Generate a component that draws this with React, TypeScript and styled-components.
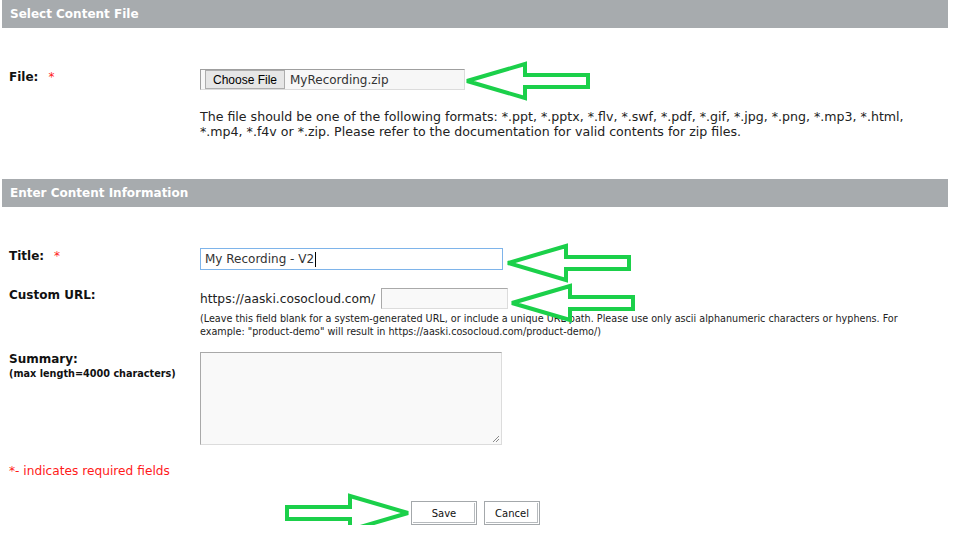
import styled, { createGlobalStyle } from "styled-components";

const GlobalStyle = createGlobalStyle`
  body {
    margin: 0;
    background: #ffffff;
    font-family: "DejaVu Sans", Verdana, sans-serif;
    color: #222222;
  }
`;

const Page = styled.div`
  width: 946px;
  margin-left: 2px;
`;

const SectionHeader = styled.div<{ $top?: number }>`
  height: 28px;
  line-height: 28px;
  margin-top: ${(p) => p.$top ?? 0}px;
  padding-left: 8px;
  background: #a7abae;
  color: #ffffff;
  font-weight: bold;
  font-size: 12px;
`;

const Row = styled.div<{ $top: number }>`
  display: flex;
  align-items: flex-start;
  margin-top: ${(p) => p.$top}px;
  padding-left: 7px;
`;

const Label = styled.div<{ $pad?: number }>`
  width: 191px;
  flex-shrink: 0;
  padding-top: ${(p) => p.$pad ?? 0}px;
  font-size: 12px;
  font-weight: bold;
  color: #111111;
  line-height: 15px;
`;

const Required = styled.span`
  color: #ff1a1a;
  font-weight: normal;
  margin-left: 10px;
`;

const SubLabel = styled.div`
  font-size: 9.7px;
  line-height: 13px;
`;

const Field = styled.div`
  display: flex;
  flex-direction: column;
  align-items: flex-start;
`;

const Anchor = styled.div`
  position: relative;
  display: inline-flex;
  align-items: center;
`;

const ArrowBox = styled.svg<{ $side: "left" | "right"; $dx: number; $dy: number }>`
  position: absolute;
  top: 50%;
  ${(p) => (p.$side === "left" ? "left: 100%;" : "right: 100%;")}
  transform: translate(
    ${(p) => (p.$side === "left" ? p.$dx : -p.$dx)}px,
    calc(-50% + ${(p) => p.$dy}px)
  );
  overflow: visible;
`;

const FileBox = styled.div`
  display: flex;
  align-items: center;
  width: 265px;
  height: 21px;
  box-sizing: border-box;
  border: 1px solid #dcdcdc;
  border-left-color: #9f9f9f;
  border-top-color: #9f9f9f;
  background: #f7f7f7;
  padding-left: 4px;
`;

const ChooseButton = styled.span`
  display: inline-flex;
  align-items: center;
  justify-content: center;
  width: 80px;
  height: 19px;
  box-sizing: border-box;
  border: 1px solid #adadad;
  background: #e6e6e6;
  font-family: "Liberation Sans", Arial, sans-serif;
  font-size: 12px;
  color: #000000;
`;

const FileName = styled.span`
  margin-left: 5px;
  font-size: 12px;
  color: #333333;
`;

const Help = styled.div<{ $small?: boolean; $top: number; $width: number }>`
  margin-top: ${(p) => p.$top}px;
  width: ${(p) => p.$width}px;
  font-size: ${(p) => (p.$small ? 9.65 : 12.6)}px;
  line-height: ${(p) => (p.$small ? 13 : 15)}px;
  color: #222222;
`;

const TextBox = styled.div<{ $width: number; $focused?: boolean }>`
  display: flex;
  align-items: center;
  width: ${(p) => p.$width}px;
  height: ${(p) => (p.$focused ? 22 : 21)}px;
  box-sizing: border-box;
  padding-left: 4px;
  font-size: 12px;
  color: #333333;
  border: 1px solid ${(p) => (p.$focused ? "#7eb4ea" : "#dcdcdc")};
  ${(p) => (p.$focused ? "" : "border-left-color: #a9a9a9; border-top-color: #a9a9a9;")}
  background: ${(p) => (p.$focused ? "#ffffff" : "#f9f9f9")};
`;

const Caret = styled.span`
  display: inline-block;
  width: 1px;
  height: 15px;
  margin-left: 1px;
  background: #000000;
`;

const UrlLine = styled.div`
  display: flex;
  align-items: center;
  gap: 6px;
  font-size: 12.25px;
  color: #222222;
`;

const TextArea = styled.div`
  position: relative;
  width: 302px;
  height: 93px;
  box-sizing: border-box;
  border: 1px solid #dcdcdc;
  border-left-color: #a9a9a9;
  border-top-color: #a9a9a9;
  background: #f9f9f9;
`;

const Grip = styled.svg`
  position: absolute;
  right: 1px;
  bottom: 1px;
`;

const RequiredNote = styled.div`
  margin-top: 19px;
  padding-left: 7px;
  font-size: 12.2px;
  line-height: 15px;
  color: #ff1a1a;
`;

const Buttons = styled.div`
  display: flex;
  justify-content: center;
  gap: 7px;
  margin-top: 22px;
  padding-left: 1px;
`;

const Button = styled.button<{ $width: number }>`
  width: ${(p) => p.$width}px;
  height: 24px;
  border: 1px solid #a4a8ab;
  box-shadow: inset 0 0 0 1px #ffffff, inset -1px -1px 0 1px #b7bbbe;
  background: #ffffff;
  font-family: "DejaVu Sans", Verdana, sans-serif;
  font-size: 10px;
  color: #111111;
  padding: 0;
`;

function Arrow({
  side = "left",
  dx = 0,
  dy = 0,
}: {
  side?: "left" | "right";
  dx?: number;
  dy?: number;
}) {
  return (
    <ArrowBox $side={side} $dx={dx} $dy={dy} width="128" height="38" viewBox="0 0 128 38">
      <g transform={side === "right" ? "translate(128,0) scale(-1,1)" : undefined}>
        <polygon
          points="3,19 61,2 61,13 124,13 124,25 61,25 61,36"
          fill="#ffffff"
          stroke="#1bd04a"
          strokeWidth="4"
          strokeLinejoin="miter"
          strokeMiterlimit="3"
        />
      </g>
    </ArrowBox>
  );
}

export default function App() {
  return (
    <>
      <GlobalStyle />
      <Page>
        <SectionHeader>Select Content File</SectionHeader>

        <Row $top={41}>
          <Label $pad={1}>
            File:<Required>*</Required>
          </Label>
          <Field>
            <Anchor>
              <FileBox>
                <ChooseButton>Choose File</ChooseButton>
                <FileName>MyRecording.zip</FileName>
              </FileBox>
              <Arrow dx={-1} dy={1} />
            </Anchor>
            <Help $top={19} $width={720}>
              The file should be one of the following formats: *.ppt, *.pptx,
              *.flv, *.swf, *.pdf, *.gif, *.jpg, *.png, *.mp3, *.html, *.mp4,
              *.f4v or *.zip. Please refer to the documentation for valid
              contents for zip files.
            </Help>
          </Field>
        </Row>

        <SectionHeader $top={40}>Enter Content Information</SectionHeader>

        <Row $top={41}>
          <Label $pad={1}>
            Title:<Required>*</Required>
          </Label>
          <Anchor>
            <TextBox $width={303} $focused>
              My Recording - V2
              <Caret />
            </TextBox>
            <Arrow dx={2} dy={4} />
          </Anchor>
        </Row>

        <Row $top={18}>
          <Label>Custom URL:</Label>
          <Field>
            <UrlLine>
              https://aaski.cosocloud.com/
              <Anchor>
                <TextBox $width={127} />
                <Arrow dx={1} dy={4} />
              </Anchor>
            </UrlLine>
            <Help $small $top={3} $width={720}>
              (Leave this field blank for a system-generated URL, or include a
              unique URL path. Please use only ascii alphanumeric characters or
              hyphens. For example: "product-demo" will result in
              https://aaski.cosocloud.com/product-demo/)
            </Help>
          </Field>
        </Row>

        <Row $top={14}>
          <Label $pad={0}>
            Summary:
            <SubLabel>(max length=4000 characters)</SubLabel>
          </Label>
          <TextArea>
            <Grip width="9" height="9" viewBox="0 0 9 9">
              <path d="M8 2 L2 8 M8 5 L5 8" stroke="#8a8a8a" strokeWidth="1" />
            </Grip>
          </TextArea>
        </Row>

        <RequiredNote>*- indicates required fields</RequiredNote>

        <Buttons>
          <Anchor>
            <Button $width={66}>Save</Button>
            <Arrow side="right" />
          </Anchor>
          <Button $width={56}>Cancel</Button>
        </Buttons>
      </Page>
    </>
  );
}
